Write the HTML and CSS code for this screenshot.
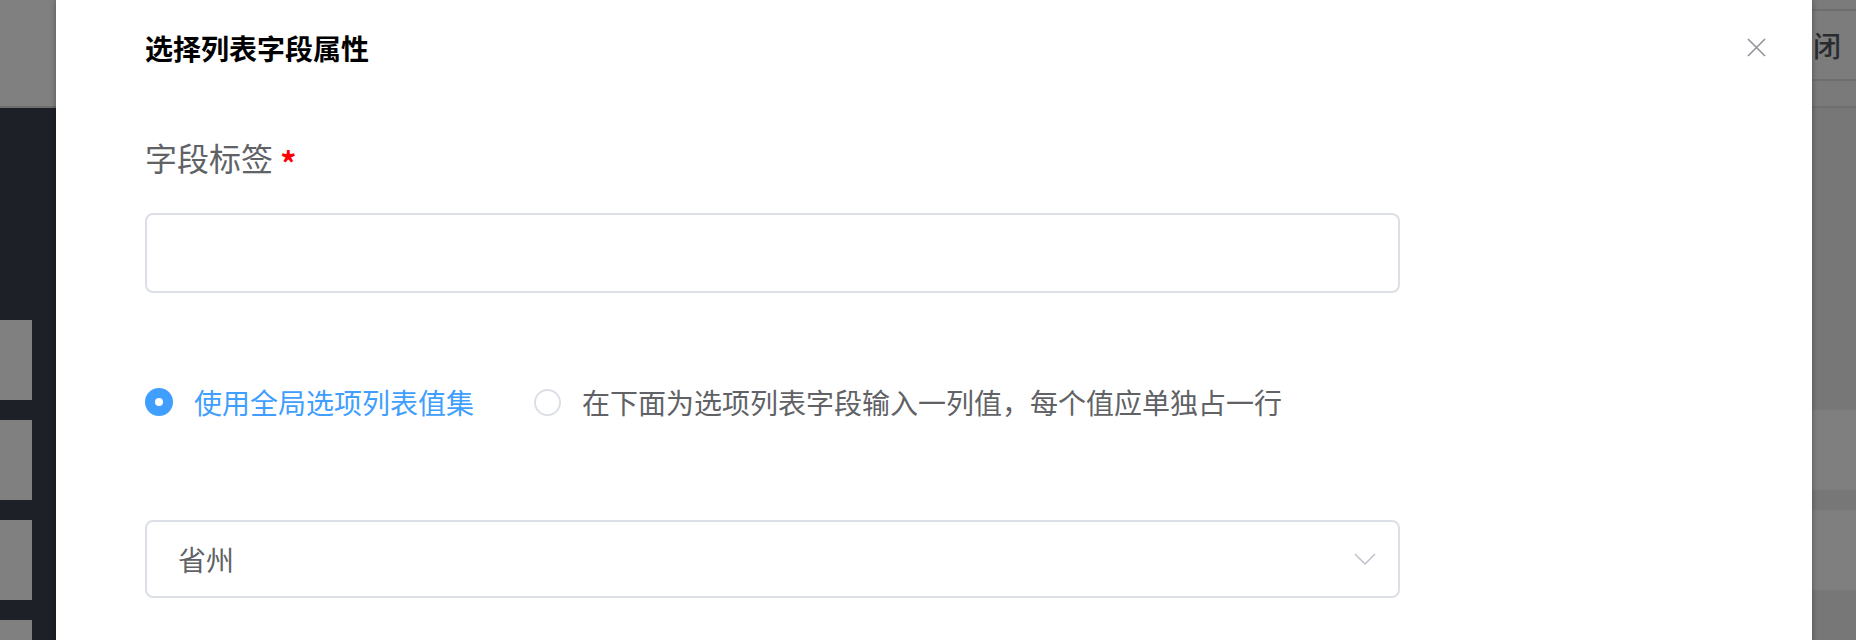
FILE: index.html
```html
<!DOCTYPE html>
<html lang="zh-CN">
<head>
  <meta charset="UTF-8" />
  <meta name="viewport" content="width=device-width, initial-scale=1.0"/>
  <title>选择列表字段属性</title>
  <link rel="stylesheet" href="styles.css">
</head>
<body>

<div class="page">
  <div class="left-col">
    <div class="left-top"></div>
    <div class="side">
      <div class="side-item"></div>
      <div class="side-item"></div>
      <div class="side-item"></div>
      <div class="side-item"></div>
    </div>
  </div>

  <div class="dialog">
    <div class="dialog-head">
      <span class="dialog-title">选择列表字段属性</span>
      <svg class="close-icon" width="19" height="19" viewBox="0 0 19 19">
        <path d="M1 1 L18 18 M18 1 L1 18" stroke="#909399" stroke-width="1.6" fill="none"/>
      </svg>
    </div>

    <div class="dialog-body">
      <div class="field-label">字段标签 <span class="req">*</span></div>
      <input class="text-input" type="text" />

      <div class="radio-row">
        <label class="radio checked">
          <span class="radio-dot"></span>
          <span>使用全局选项列表值集</span>
        </label>
        <label class="radio">
          <span class="radio-dot"></span>
          <span>在下面为选项列表字段输入一列值，每个值应单独占一行</span>
        </label>
      </div>

      <div class="select">
        <span>省州</span>
        <svg class="arrow" width="22" height="12" viewBox="0 0 22 12">
          <path d="M1 1 L11 11 L21 1" stroke="#c0c4cc" stroke-width="1.6" fill="none"/>
        </svg>
      </div>
    </div>
  </div>

  <div class="right-col">
    <div class="r-row r-thin"></div>
    <div class="r-row r-btn"><span>闭</span></div>
    <div class="r-row r-mid"></div>
    <div class="r-row r-dark"></div>
    <div class="r-row r-light"></div>
    <div class="r-row r-gap"></div>
    <div class="r-row r-light"></div>
    <div class="r-row r-rest"></div>
  </div>
</div>

</body>
</html>
```

FILE: styles.css
```css
* { box-sizing: border-box; }

body {
  margin: 0;
  font-family: "Noto Sans CJK SC", "Noto Sans", sans-serif;
  background: #1d2027;
}

.page {
  display: grid;
  grid-template-columns: 56px 1fr 44px;
  height: 640px;
  overflow: hidden;
}

/* dimmed page behind the dialog */
.left-col {
  display: flex;
  flex-direction: column;
}

.left-top {
  height: 108px;
  background: #808080;
  border-bottom: 2px solid #6e6e6e;
}

.side {
  flex: 1;
  background: #1d2027;
  padding-top: 212px;
  display: flex;
  flex-direction: column;
  gap: 20px;
}

.side-item {
  width: 32px;
  height: 80px;
  flex-shrink: 0;
  background: #808080;
}

.right-col {
  display: flex;
  flex-direction: column;
  background: #777;
  overflow: hidden;
}

.r-row { flex-shrink: 0; }

.r-thin {
  height: 11px;
  background: #7b7b7b;
  border-bottom: 2px solid #6e6e6e;
}

/* the "关闭" button is hidden behind the dialog, only its last glyph shows */
.r-btn {
  height: 70px;
  background: #7c7c7c;
  border-bottom: 2px solid #6e6e6e;
  display: flex;
  align-items: center;
  padding-left: 1px;
}

.r-btn span {
  font-size: 28px;
  font-weight: 500;
  color: #2a2b2f;
  line-height: 40px;
}

.r-mid {
  height: 27px;
  background: #7a7a7a;
  border-bottom: 2px solid #6e6e6e;
}

.r-dark { height: 302px; background: #777; }
.r-light { height: 80px; background: #7f7f7f; }
.r-gap { height: 20px; background: #777; }
.r-rest { flex: 1; background: #777; }

/* dialog */
.dialog {
  background: #fff;
  box-shadow: 0 0 6px rgba(0, 0, 0, 0.35);
  position: relative;
  z-index: 1;
}

.dialog-head {
  display: flex;
  justify-content: space-between;
  align-items: center;
  padding: 28px 46px 0 89px;
  height: 68px;
}

.dialog-title {
  font-size: 28px;
  font-weight: bold;
  color: #000;
  line-height: 40px;
}

.close-icon {
  margin-top: -2px;
}

.dialog-body {
  padding-left: 89px;
  width: 1344px;
}

.field-label {
  margin-top: 67px;
  height: 44px;
  font-size: 32px;
  line-height: 44px;
  color: #606266;
}

.req {
  color: #ff0000;
  font-size: 32px;
  font-weight: bold;
  line-height: 0;
  vertical-align: -5px;
}

.text-input {
  display: block;
  width: 100%;
  height: 80px;
  margin-top: 34px;
  border: 2px solid #dcdfe6;
  border-radius: 8px;
  outline: none;
}

.radio-row {
  display: flex;
  gap: 60px;
  margin-top: 89px;
  height: 40px;
  align-items: center;
}

.radio {
  display: flex;
  align-items: center;
  gap: 21px;
  font-size: 28px;
  line-height: 40px;
  color: #606266;
}

.radio-dot {
  width: 27px;
  height: 27px;
  border: 2px solid #dcdfe6;
  border-radius: 50%;
  background: #fff;
}

.radio.checked { color: #409eff; }

.radio.checked .radio-dot {
  border: 10px solid #409eff;
  width: 28px;
  height: 28px;
}

.select {
  margin-top: 98px;
  height: 78px;
  border: 2px solid #dcdfe6;
  border-radius: 8px;
  display: flex;
  justify-content: space-between;
  align-items: center;
  padding: 0 22px 0 31px;
  font-size: 28px;
  color: #606266;
}
```
